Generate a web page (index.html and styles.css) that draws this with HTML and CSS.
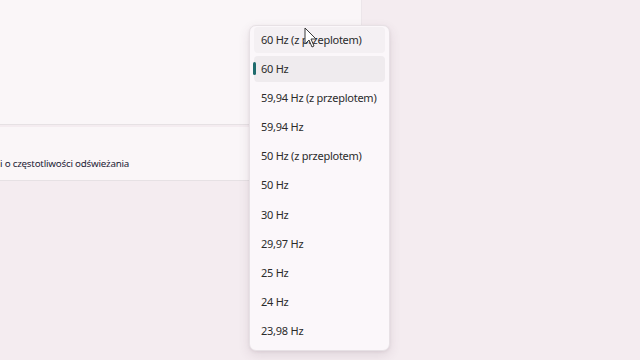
FILE: index.html
```html
<!DOCTYPE html>
<html lang="pl">
<head>
<meta charset="utf-8">
<link rel="stylesheet" href="styles.css">
</head>
<body>
<div class="page">
  <div class="content">
    <div class="card card-top"></div>
    <div class="card card-link">
      <span class="link">i o częstotliwości odświeżania</span>
    </div>
  </div>
</div>
<div class="menu">
  <div class="item hover">60 Hz (z przeplotem)</div>
  <div class="item selected"><span class="bar"></span>60 Hz</div>
  <div class="item">59,94 Hz (z przeplotem)</div>
  <div class="item">59,94 Hz</div>
  <div class="item">50 Hz (z przeplotem)</div>
  <div class="item">50 Hz</div>
  <div class="item">30 Hz</div>
  <div class="item">29,97 Hz</div>
  <div class="item">25 Hz</div>
  <div class="item">24 Hz</div>
  <div class="item">23,98 Hz</div>
</div>
<svg class="cursor" width="14" height="22" viewBox="0 0 14 22">
  <path d="M1 1 L1 17 L5 13 L8 20 L10 19 L7 12 L12 12 Z" fill="#ffffff" stroke="#3a3a3a" stroke-width="1" stroke-linejoin="round"/>
</svg>
</body>
</html>
```
FILE: styles.css
```css
html, body {
  margin: 0;
  padding: 0;
  width: 640px;
  height: 360px;
  overflow: hidden;
  background: #f4ecf0;
  font-family: "Noto Sans", "Open Sans", "DejaVu Sans", sans-serif;
}
.page {
  display: flex;
  height: 360px;
}
.content {
  width: 362px;
  display: flex;
  flex-direction: column;
  gap: 2px;
}
.card {
  background: #faf6f8;
  border-right: 1px solid #ece6ea;
  border-bottom: 1px solid #e6e1e4;
}
.card-top {
  height: 124px;
}
.card-link {
  height: 54px;
  display: flex;
  align-items: center;
  padding-top: 20px;
  box-sizing: border-box;
}
.link {
  font-size: 9.8px;
  letter-spacing: -0.22px;
  color: #1d2236;
}
.menu {
  position: absolute;
  left: 249px;
  top: 25px;
  width: 141px;
  height: 326px;
  box-sizing: border-box;
  background: #fbf7fa;
  border: 1px solid #e7e1e5;
  border-radius: 7px;
  box-shadow: 0 4px 12px rgba(80, 50, 70, 0.12), 0 1px 3px rgba(80, 50, 70, 0.08);
  padding: 1px 4px;
  display: flex;
  flex-direction: column;
  gap: 3.1px;
}
.item {
  position: relative;
  flex: none;
  height: 26px;
  line-height: 26px;
  padding-left: 7px;
  font-size: 11px;
  letter-spacing: -0.25px;
  color: #2b2b2b;
  border-radius: 4px;
  white-space: nowrap;
}
.item.hover {
  background: #f4f0f3;
}
.item.selected {
  background: #efebee;
}
.bar {
  position: absolute;
  left: -1px;
  top: 6px;
  width: 3px;
  height: 13px;
  border-radius: 2px;
  background: #1f6b6d;
}
.cursor {
  position: absolute;
  left: 304px;
  top: 27px;
}
```
